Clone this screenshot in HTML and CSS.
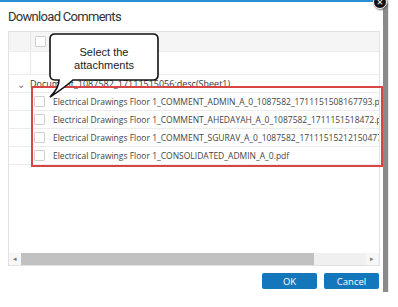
FILE: index.html
```html
<!DOCTYPE html>
<html lang="en">
<head>
  <meta charset="UTF-8" />
  <title>Download Comments</title>
  <link rel="stylesheet" href="styles.css">
</head>
<body>
  <div class="dialog">
    <div class="close">&times;</div>
    <div class="title">Download Comments</div>

    <div class="grid">
      <div class="row header">
        <div class="gutter"></div>
        <div class="cell"><span class="check"></span></div>
      </div>
      <div class="row blank">
        <div class="gutter"></div>
        <div class="cell"></div>
      </div>
      <div class="row group">
        <span class="chevron">&#8964;</span>
        <span>Document_1087582_17111515056:desc(Sheet1)</span>
      </div>
      <div class="row item">
        <div class="gutter"></div>
        <div class="cell"><span class="check"></span>Electrical Drawings Floor 1_COMMENT_ADMIN_A_0_1087582_1711151508167793.pdf</div>
      </div>
      <div class="row item">
        <div class="gutter"></div>
        <div class="cell"><span class="check"></span>Electrical Drawings Floor 1_COMMENT_AHEDAYAH_A_0_1087582_1711151518472.pdf</div>
      </div>
      <div class="row item">
        <div class="gutter"></div>
        <div class="cell"><span class="check"></span>Electrical Drawings Floor 1_COMMENT_SGURAV_A_0_1087582_17111515212150477.pdf</div>
      </div>
      <div class="row item">
        <div class="gutter"></div>
        <div class="cell"><span class="check"></span>Electrical Drawings Floor 1_CONSOLIDATED_ADMIN_A_0.pdf</div>
      </div>
      <div class="filler"></div>
      <div class="scrollbar">
        <span class="arrow">&#9666;</span>
        <span class="thumb"></span>
        <span class="arrow end">&#9656;</span>
      </div>

      <div class="highlight"></div>
    </div>

    <div class="buttons">
      <button>OK</button>
      <button>Cancel</button>
    </div>

    <div class="callout">
      <svg width="112" height="66" viewBox="0 0 112 66">
        <path d="M6 1 H104 Q109 1 109 6 V42 Q109 47 104 47 H24 Q15 55 1 64 Q10 55 10 47 H6 Q1 47 1 42 V6 Q1 1 6 1 Z"
              fill="#fff" stroke="#111" stroke-width="1.6" />
      </svg>
      <div class="callout-text">Select the<br>attachments</div>
    </div>
  </div>
</body>
</html>
```

FILE: styles.css
```css
body {
  margin: 0;
  background-color: #fff;
  font-family: "Open Sans", sans-serif;
}

.dialog {
  position: relative;
  width: 383px;
  height: 292px;
  border-top: 2px solid #2a8fd0;
  background-color: #fff;
  box-shadow: 5px 4px 1px #8a8a8a;
  box-sizing: border-box;
  padding-top: 5px;
}

.close {
  position: absolute;
  top: -7px;
  right: -4px;
  width: 12px;
  height: 12px;
  border-radius: 50%;
  background-color: #111;
  border: 1px solid #fff;
  color: #fff;
  font-size: 11px;
  line-height: 12px;
  text-align: center;
  box-shadow: 1px 1px 2px #666;
}

.title {
  font-family: Roboto, sans-serif;
  font-size: 13px;
  letter-spacing: -0.7px;
  color: #333;
  padding-left: 8px;
  height: 24px;
  line-height: 19px;
}

.grid {
  position: relative;
  margin: 0 3px 0 8px;
  height: 233px;
  border: 1px solid #e2e2e2;
  display: flex;
  flex-direction: column;
  font-size: 8.5px;
  color: #444;
}

.row {
  display: flex;
  border-bottom: 1px solid #ececec;
  white-space: nowrap;
  overflow: hidden;
}

.gutter {
  width: 21px;
  flex: none;
  border-right: 1px solid #e6e6e6;
}

.cell {
  display: flex;
  align-items: center;
  padding-left: 4px;
}

.header {
  height: 19px;
  background-color: #f5f5f5;
}

.blank {
  height: 22px;
}

.group {
  height: 17px;
  align-items: center;
  padding-left: 8px;
  font-size: 9px;
  color: #333;
}

.chevron {
  width: 13px;
  color: #777;
  font-size: 10px;
  line-height: 8px;
}

.item {
  height: 17px;
}

.item .gutter {
  border-right: none;
}

.check {
  display: inline-block;
  width: 9px;
  height: 9px;
  border: 1px solid #cfcfcf;
  border-radius: 1px;
  background-color: #fff;
  margin-right: 8px;
  flex: none;
}

.filler {
  flex: 1;
}

.scrollbar {
  height: 12px;
  display: flex;
  align-items: center;
  background-color: #f0f0f0;
}

.arrow {
  width: 12px;
  height: 12px;
  line-height: 12px;
  text-align: center;
  color: #777;
  font-size: 7px;
  background-color: #f7f7f7;
}

.arrow.end {
  margin-right: 1px;
}

.thumb {
  height: 12px;
  width: 293px;
  background-color: #c1c1c1;
  margin-right: auto;
}

.highlight {
  position: absolute;
  left: 22px;
  top: 54px;
  width: 348px;
  height: 77px;
  border: 2px solid #d94444;
}

.buttons {
  display: flex;
  justify-content: flex-end;
  gap: 7px;
  padding: 7px 4px 0 0;
}

button {
  width: 55px;
  height: 16px;
  padding: 0;
  border: none;
  border-radius: 2px;
  background-color: #1477bb;
  color: #fff;
  font-family: "Open Sans", sans-serif;
  font-size: 9.5px;
}

.callout {
  position: absolute;
  left: 49px;
  top: 31px;
  width: 112px;
  height: 66px;
}

.callout svg {
  display: block;
}

.callout-text {
  position: absolute;
  left: 1px;
  top: 13px;
  width: 108px;
  text-align: center;
  font-family: "Liberation Sans", Arial, sans-serif;
  font-size: 11px;
  line-height: 13px;
  color: #222;
}
```
